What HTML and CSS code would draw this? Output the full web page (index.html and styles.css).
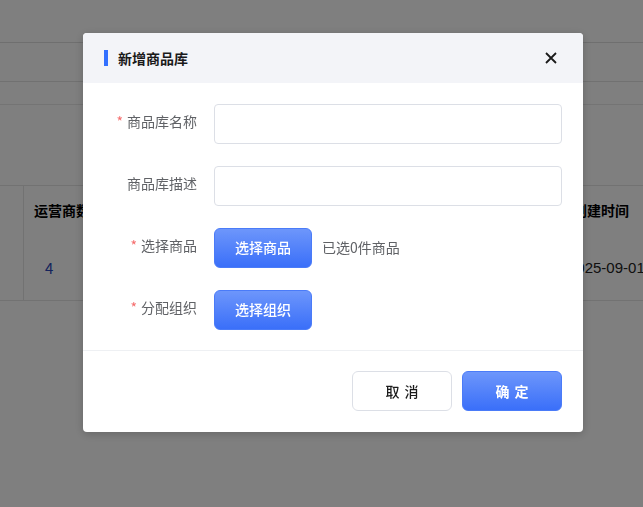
FILE: index.html
```html
<!DOCTYPE html>
<html lang="zh-CN">
<head>
    <meta charset="UTF-8">
    <title>商品库管理</title>
    <link rel="stylesheet" href="styles.css">
</head>
<body>

    <div class="page">
        <div class="top_bar"></div>
        <div class="tab_bar"></div>
        <div class="filter_bar"></div>

        <div class="table">
            <div class="table_row table_head">
                <div class="cell cell_check"></div>
                <div class="cell cell_count">运营商数</div>
                <div class="cell cell_fill"></div>
                <div class="cell cell_time">创建时间</div>
            </div>
            <div class="table_row table_body">
                <div class="cell cell_check"></div>
                <div class="cell cell_count"><span class="link_num">4</span></div>
                <div class="cell cell_fill"></div>
                <div class="cell cell_time"><span class="date">2025-09-01</span></div>
            </div>
        </div>
    </div>

    <div class="mask"></div>

    <div class="dialog">
        <div class="dialog_head">
            <span class="head_bar"></span>
            <span class="head_title">新增商品库</span>
            <span class="head_close">
                <svg width="12" height="12" viewBox="0 0 12 12"><path d="M1 1L11 11M11 1L1 11" stroke="#1a1a1a" stroke-width="1.8" fill="none"/></svg>
            </span>
        </div>

        <div class="dialog_body">
            <div class="form_row">
                <label class="form_label"><i class="req">*</i>商品库名称</label>
                <div class="form_field"><input class="text_input" type="text"></div>
            </div>
            <div class="form_row">
                <label class="form_label">商品库描述</label>
                <div class="form_field"><input class="text_input" type="text"></div>
            </div>
            <div class="form_row">
                <label class="form_label"><i class="req">*</i>选择商品</label>
                <div class="form_field">
                    <button class="btn btn_blue" type="button">选择商品</button>
                    <span class="picked">已选0件商品</span>
                </div>
            </div>
            <div class="form_row">
                <label class="form_label"><i class="req">*</i>分配组织</label>
                <div class="form_field">
                    <button class="btn btn_blue" type="button">选择组织</button>
                </div>
            </div>
        </div>

        <div class="dialog_foot">
            <button class="btn btn_wide btn_plain" type="button">取消</button>
            <button class="btn btn_wide btn_blue btn_bold" type="button">确定</button>
        </div>
    </div>

</body>
</html>
```

FILE: styles.css
```css
:root {
    --blue-top: #6d96fb;
    --blue-bottom: #3a6ff9;
    --line: #dcdfe6;
    --label: #606266;
}
html, body {
    margin: 0;
    padding: 0;
    height: 100%;
}
body {
    font-family: "Noto Sans CJK SC", "Noto Sans", sans-serif;
    font-size: 14px;
    background: #ffffff;
    overflow: hidden;
}

/* page behind the dialog */
.page {
    width: 100%;
}
.top_bar {
    height: 42px;
    border-bottom: 1px solid #dedede;
}
.tab_bar {
    height: 38px;
    border-bottom: 1px solid #e2e2e2;
}
.filter_bar {
    height: 22px;
    border-bottom: 1px solid #e8e8e8;
}
.table {
    margin-top: 80px;
    border-top: 1px solid #e4e4e4;
    border-bottom: 1px solid #e4e4e4;
}
.table_row {
    display: flex;
    align-items: center;
}
.table_head {
    height: 48px;
    font-weight: bold;
    color: #000000;
    font-size: 14px;
}
.table_body {
    height: 66px;
    color: #222222;
}
.cell {
    height: 100%;
    display: flex;
    align-items: center;
    white-space: nowrap;
}
.cell_check {
    width: 23px;
    border-right: 1px solid #e4e4e4;
}
.cell_count {
    width: 120px;
    padding-left: 10px;
}
.link_num {
    color: #2846b8;
    font-size: 15px;
    padding-left: 11px;
}
.cell_fill {
    flex: 1;
}
.cell_time {
    width: 70px;
    overflow: visible;
}
.date {
    font-family: "Liberation Sans", sans-serif;
    font-size: 15px;
    margin-left: -5px;
}

/* dialog */
.mask {
    position: fixed;
    inset: 0;
    background: rgba(0, 0, 0, 0.5);
}
.dialog {
    position: fixed;
    left: 83px;
    top: 33px;
    width: 500px;
    background: #ffffff;
    border-radius: 4px;
    box-shadow: 0 2px 10px rgba(0, 0, 0, 0.2);
    overflow: hidden;
}
.dialog_head {
    height: 50px;
    background: #f3f4f8;
    display: flex;
    align-items: center;
    padding: 0 24px 0 21px;
}
.head_bar {
    width: 4px;
    height: 16px;
    background: #3370ff;
    margin-right: 10px;
}
.head_title {
    font-size: 14px;
    font-weight: bold;
    color: #1a1a1a;
    flex: 1;
}
.head_close {
    display: flex;
    align-items: center;
    padding: 2px;
}
.dialog_body {
    padding: 21px 21px 20px 0;
    display: flex;
    flex-direction: column;
    gap: 22px;
    border-bottom: 1px solid #eef0f3;
}
.form_row {
    display: flex;
    align-items: flex-start;
    height: 40px;
}
.form_label {
    width: 114px;
    padding: 7px 17px 0 0;
    line-height: 20px;
    text-align: right;
    color: var(--label);
    font-size: 14px;
}
.req {
    font-style: normal;
    color: #f56c6c;
    margin-right: 4px;
}
.form_field {
    flex: 1;
    display: flex;
    align-items: center;
}
.text_input {
    box-sizing: border-box;
    width: 100%;
    height: 40px;
    border: 1px solid var(--line);
    border-radius: 4px;
    outline: none;
    padding: 0 12px;
    font: inherit;
}
.btn {
    box-sizing: border-box;
    width: 98px;
    height: 40px;
    border-radius: 6px;
    font-family: inherit;
    font-size: 14px;
    font-weight: 500;
    padding: 0 0 2px;
    cursor: pointer;
}
.btn_blue {
    border: 1px solid #4a7bf8;
    background: linear-gradient(180deg, var(--blue-top), var(--blue-bottom));
    color: #ffffff;
}
.btn_wide {
    width: 100px;
    letter-spacing: 5px;
    text-indent: 5px;
    padding: 0;
}
.btn_plain {
    background: #ffffff;
    border: 1px solid var(--line);
    color: #1a1a1a;
}
.btn_bold {
    font-weight: bold;
}
.picked {
    margin-left: 10px;
    padding-bottom: 3px;
    color: var(--label);
}
.dialog_foot {
    display: flex;
    justify-content: flex-end;
    gap: 10px;
    padding: 20px 21px 21px;
}
```
